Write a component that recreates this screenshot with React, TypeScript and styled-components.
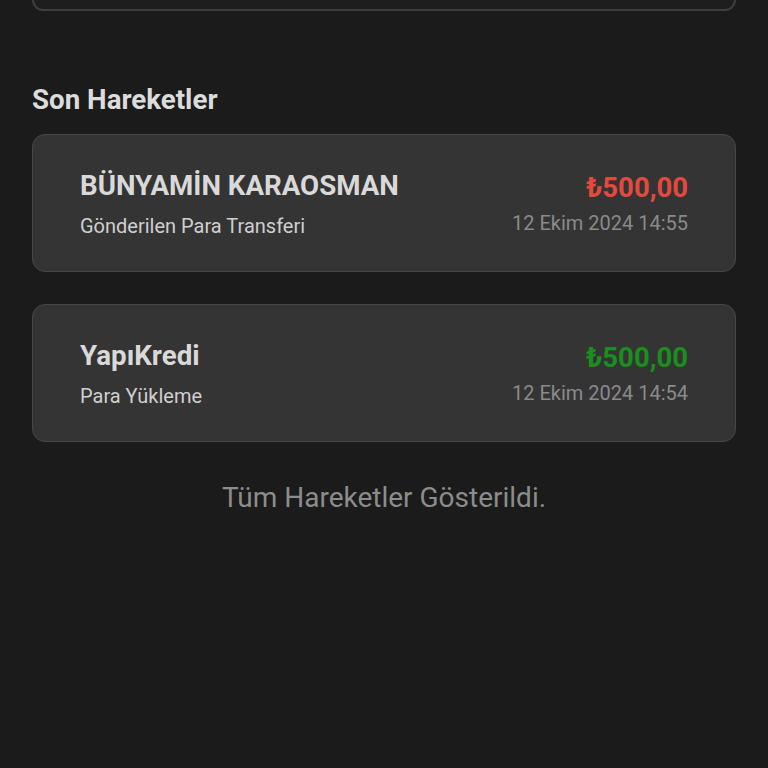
import React from 'react';
import styled, { createGlobalStyle } from 'styled-components';

const GlobalStyle = createGlobalStyle`
      html, body {
            margin: 0;
            padding: 0;
            background: #1b1b1b;
            font-family: Roboto, "Noto Sans", Arial, sans-serif;
      }
`;

interface Transaction {
      name: string;
      kind: string;
      amount: string;
      date: string;
      incoming: boolean;
}

const transactions: Transaction[] = [
      { name: 'BÜNYAMİN KARAOSMAN', kind: 'Gönderilen Para Transferi', amount: '₺500,00', date: '12 Ekim 2024 14:55', incoming: false },
      { name: 'YapıKredi', kind: 'Para Yükleme', amount: '₺500,00', date: '12 Ekim 2024 14:54', incoming: true },
];

const Page = styled.div`
      min-height: 768px;
      padding: 0 32px;
      box-sizing: border-box;
      display: flex;
      flex-direction: column;
`;

const BalanceCardEdge = styled.div`
      height: 11px;
      border: 2px solid #3e3e3e;
      border-top: none;
      border-radius: 0 0 14px 14px;
      box-sizing: border-box;
      background: #1e1e1e;
`;

const SectionTitle = styled.h2`
      margin: 73px 0 18px;
      font-size: 27.7px;
      line-height: 32px;
      font-weight: 700;
      color: #dcdcdc;
`;

const List = styled.div`
      display: flex;
      flex-direction: column;
      gap: 32px;
`;

const Card = styled.div`
      height: 138px;
      box-sizing: border-box;
      padding: 0 47px;
      display: flex;
      align-items: center;
      justify-content: space-between;
      background: #343434;
      border: 1.5px solid #474747;
      border-radius: 13px;
`;

const Column = styled.div<{ $right?: boolean }>`
      display: flex;
      flex-direction: column;
      align-items: ${(props) => (props.$right ? 'flex-end' : 'flex-start')};
      gap: ${(props) => (props.$right ? '7px' : '12px')};
      margin-top: ${(props) => (props.$right ? '0' : '2px')};
`;

const Name = styled.div`
      font-size: 27.7px;
      line-height: 32px;
      font-weight: 700;
      color: #d9d9d9;
`;

const Kind = styled.div`
      font-size: 20px;
      line-height: 24px;
      color: #cfcfcf;
`;

const Amount = styled.div<{ $incoming: boolean }>`
      font-size: 27.5px;
      line-height: 32px;
      font-weight: 700;
      color: ${(props) => (props.$incoming ? '#1a8f1d' : '#e5493d')};
`;

const DateText = styled.div`
      font-size: 20px;
      line-height: 24px;
      color: #8a8a8a;
`;

const Footer = styled.div`
      margin-top: 40px;
      text-align: center;
      font-size: 28px;
      line-height: 32px;
      color: #8c8c8c;
`;

export default function App() {
      return (
            <>
                  <GlobalStyle />
                  <Page>
                        <BalanceCardEdge />
                        <SectionTitle>Son Hareketler</SectionTitle>
                        <List>
                              {transactions.map((t) => (
                                    <Card key={t.date}>
                                          <Column>
                                                <Name>{t.name}</Name>
                                                <Kind>{t.kind}</Kind>
                                          </Column>
                                          <Column $right>
                                                <Amount $incoming={t.incoming}>{t.amount}</Amount>
                                                <DateText>{t.date}</DateText>
                                          </Column>
                                    </Card>
                              ))}
                        </List>
                        <Footer>Tüm Hareketler Gösterildi.</Footer>
                  </Page>
            </>
      );
}
